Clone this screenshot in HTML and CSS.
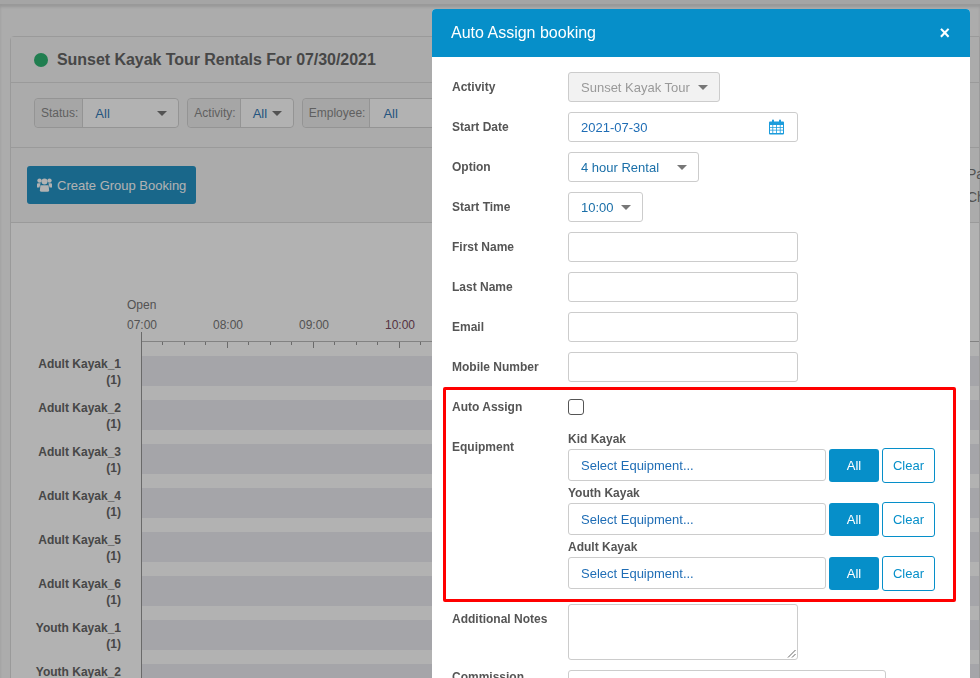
FILE: index.html
```html
<!DOCTYPE html>
<html lang="en">
<head>
    <meta charset="UTF-8">
    <meta name="viewport" content="width=device-width, initial-scale=1.0">
    <title>Auto Assign booking</title>
    <link rel="stylesheet" href="styles.css">
</head>
<body>
    <div class="page">
        <div class="panel">
            <div class="panel-title">
                <span class="dot"></span>
                <h2>Sunset Kayak Tour Rentals For 07/30/2021</h2>
            </div>
            <div class="filters">
                <div class="filter"><span class="filter-label">Status:</span><span class="filter-value status-value">All <i class="caret"></i></span></div>
                <div class="filter"><span class="filter-label">Activity:</span><span class="filter-value activity-value">All <i class="caret"></i></span></div>
                <div class="filter"><span class="filter-label">Employee:</span><span class="filter-value employee-value">All</span></div>
            </div>
            <div class="actions">
                <button class="group-btn">
                    <svg class="group-icon" viewBox="0 0 15 14" width="15" height="14">
                        <circle cx="7.5" cy="3.4" r="3"/>
                        <circle cx="2.5" cy="2.6" r="2.2"/>
                        <circle cx="12.5" cy="2.6" r="2.2"/>
                        <path d="M3.4 7.2h8.2l.5 5q0 1.6-1.6 1.6H4.5q-1.6 0-1.6-1.6z"/>
                        <path d="M0 9.4V6.2q0-1 1-1h2.6L2.4 9.4zM15 9.4V6.2q0-1-1-1h-2.6l1.2 4.2z"/>
                    </svg>
                    <span>Create Group Booking</span>
                </button>
                <div class="cut-text"><span>Pa</span><span>Ch</span></div>
            </div>
            <div class="schedule">
                <div class="open-label">Open</div>
                <div class="hours">
                    <span>07:00</span><span>08:00</span><span>09:00</span><span class="red-hour">10:00</span>
                </div>
                <div class="ruler"></div>
                <div class="row"><div class="row-name">Adult Kayak_1<br>(1)</div><div class="track"><div class="band"></div></div></div>
                <div class="row"><div class="row-name">Adult Kayak_2<br>(1)</div><div class="track"><div class="band"></div></div></div>
                <div class="row"><div class="row-name">Adult Kayak_3<br>(1)</div><div class="track"><div class="band"></div></div></div>
                <div class="row"><div class="row-name">Adult Kayak_4<br>(1)</div><div class="track"><div class="band"></div></div></div>
                <div class="row"><div class="row-name">Adult Kayak_5<br>(1)</div><div class="track"><div class="band"></div></div></div>
                <div class="row"><div class="row-name">Adult Kayak_6<br>(1)</div><div class="track"><div class="band"></div></div></div>
                <div class="row"><div class="row-name">Youth Kayak_1<br>(1)</div><div class="track"><div class="band"></div></div></div>
                <div class="row"><div class="row-name">Youth Kayak_2</div><div class="track"><div class="band"></div></div></div>
            </div>
        </div>
    </div>

    <div class="overlay"></div>

    <div class="modal">
        <div class="modal-head">
            <h3>Auto Assign booking</h3>
            <span class="modal-close">×</span>
        </div>
        <div class="modal-body">
            <div class="form-row">
                <label>Activity</label>
                <div class="field select-field disabled activity-select">Sunset Kayak Tour <i class="caret"></i></div>
            </div>
            <div class="form-row">
                <label>Start Date</label>
                <div class="field date-field">2021-07-30
                    <svg class="cal-icon" viewBox="0 0 15 16" width="15" height="16">
                        <path fill-rule="evenodd" d="M1 2.5h2V1.5a1 1 0 0 1 2 0v1h5v-1a1 1 0 0 1 2 0v1h2a1 1 0 0 1 1 1v11a1 1 0 0 1-1 1H1a1 1 0 0 1-1-1v-11a1 1 0 0 1 1-1zM1 6v2h2.4V6zM4.2 6v2h2.9V6zM7.9 6v2h2.9V6zM11.6 6v2H14V6zM1 8.8v2h2.4v-2zM4.2 8.8v2h2.9v-2zM7.9 8.8v2h2.9v-2zM11.6 8.8v2H14v-2zM1 11.6v2.4h2.4v-2.4zM4.2 11.6v2.4h2.9v-2.4zM7.9 11.6v2.4h2.9v-2.4zM11.6 11.6v2.4H14v-2.4z"/>
                    </svg>
                </div>
            </div>
            <div class="form-row">
                <label>Option</label>
                <div class="field select-field option-select">4 hour Rental <i class="caret"></i></div>
            </div>
            <div class="form-row">
                <label>Start Time</label>
                <div class="field select-field time-select">10:00 <i class="caret"></i></div>
            </div>
            <div class="form-row">
                <label>First Name</label>
                <div class="field text-field"></div>
            </div>
            <div class="form-row">
                <label>Last Name</label>
                <div class="field text-field"></div>
            </div>
            <div class="form-row">
                <label>Email</label>
                <div class="field text-field"></div>
            </div>
            <div class="form-row">
                <label>Mobile Number</label>
                <div class="field text-field"></div>
            </div>

            <div class="assign-box">
                <div class="assign-row">
                    <label>Auto Assign</label>
                    <span class="checkbox"></span>
                </div>
                <div class="equipment-row">
                    <label>Equipment</label>
                    <div class="equipment-list">
                        <div class="equip-name">Kid Kayak</div>
                        <div class="equip-line">
                            <div class="field equip-select">Select Equipment...</div>
                            <button class="btn-all">All</button>
                            <button class="btn-clear">Clear</button>
                        </div>
                        <div class="equip-name">Youth Kayak</div>
                        <div class="equip-line">
                            <div class="field equip-select">Select Equipment...</div>
                            <button class="btn-all">All</button>
                            <button class="btn-clear">Clear</button>
                        </div>
                        <div class="equip-name">Adult Kayak</div>
                        <div class="equip-line">
                            <div class="field equip-select">Select Equipment...</div>
                            <button class="btn-all">All</button>
                            <button class="btn-clear">Clear</button>
                        </div>
                    </div>
                </div>
            </div>

            <div class="notes-row">
                <label>Additional Notes</label>
                <div class="field notes-field">
                    <svg class="grip" viewBox="0 0 9 9" width="9" height="9"><path d="M1 8.5 8.5 1M5 8.5 8.5 5"/></svg>
                </div>
            </div>
            <div class="commission-row">
                <label>Commission</label>
                <div class="field commission-field"></div>
            </div>
        </div>
    </div>
</body>
</html>
```

FILE: styles.css
```css
html, body {
    margin: 0;
    height: 678px;
    overflow: hidden;
}

body {
    font-family: "Liberation Sans", Arial, sans-serif;
    font-size: 13px;
    color: #333;
    background: #fff;
}

.page {
    height: 678px;
    padding: 32px 0 0 10px;
    box-sizing: border-box;
    background: #f7f7f7;
    border-top: 4px solid #ededed;
    box-shadow: inset 0 3px 3px rgba(0,0,0,0.12);
    overflow: hidden;
}

.panel {
    background: #fff;
    border: 1px solid #ddd;
    border-radius: 4px 0 0 0;
    height: 700px;
}

.panel-title {
    display: flex;
    align-items: center;
    height: 45px;
    padding-left: 23px;
    border-bottom: 1px solid #ddd;
    background: #f5f5f5;
}

.dot {
    width: 14px;
    height: 14px;
    border-radius: 50%;
    background: #2fb573;
    margin-right: 9px;
}

h2 {
    margin: 0;
    font-size: 16px;
    font-weight: 700;
    letter-spacing: -0.05px;
    color: #666;
}

.filters {
    display: flex;
    gap: 8px;
    height: 65px;
    padding: 15px 0 0 23px;
    box-sizing: border-box;
    border-bottom: 1px solid #ddd;
    background: #f5f5f5;
}

.filter {
    display: flex;
    height: 30px;
    border: 1px solid #d4d4d4;
    border-radius: 4px;
    font-size: 12px;
    box-sizing: border-box;
}

.filter-label {
    display: flex;
    align-items: center;
    padding: 0 4px 0 6px;
    color: #8a8a8a;
    background: #eee;
    border-right: 1px solid #d4d4d4;
    border-radius: 4px 0 0 4px;
}

.filter-value {
    display: flex;
    align-items: center;
    justify-content: space-between;
    color: #337ab7;
    font-size: 13px;
    background: #fff;
    border-radius: 0 4px 4px 0;
    box-sizing: border-box;
}

.status-value { width: 95px; padding: 0 11px 0 12px; }
.activity-value { width: 52px; padding: 0 11px 0 12px; }
.employee-value { width: 80px; padding: 0 13px; }

.caret {
    display: inline-block;
    width: 0;
    height: 0;
    border-left: 5px solid transparent;
    border-right: 5px solid transparent;
    border-top: 5px solid #777;
}

.actions {
    display: flex;
    height: 75px;
    padding: 18px 0 0 16px;
    box-sizing: border-box;
    border-bottom: 1px solid #ddd;
    background: #f5f5f5;
}

.group-btn {
    display: flex;
    flex: none;
    align-items: center;
    gap: 5px;
    width: 169px;
    height: 38px;
    padding: 0 0 0 10px;
    border: none;
    border-radius: 3px;
    background: #2494c6;
    color: #fff;
    font-family: inherit;
    font-size: 13px;
    white-space: nowrap;
}

.group-icon { fill: #fff; }

.cut-text {
    display: flex;
    flex: none;
    flex-direction: column;
    gap: 7px;
    margin-left: 771px;
    color: #777;
    font-size: 14px;
    line-height: 16px;
}

.schedule {
    padding-top: 75px;
    background: #fff;
}

.open-label,
.hours {
    margin-left: 116px;
    font-size: 12px;
    line-height: 14px;
    color: #777;
}

.hours {
    display: flex;
    margin-top: 6px;
}

.hours span { width: 86px; }
.red-hour { color: #7a4a60; }

.ruler {
    height: 24px;
    margin-left: 130px;
    background:
        linear-gradient(#999, #999) 0 0 / 1px 100% no-repeat,
        linear-gradient(#bbb, #bbb) 0 9px / 100% 1px no-repeat,
        repeating-linear-gradient(90deg, #999 0 1px, transparent 1px 86px) 0 9px / 100% 7px no-repeat,
        repeating-linear-gradient(90deg, #999 0 1px, transparent 1px 21.5px) 0 9px / 100% 4px no-repeat;
}

.row {
    display: flex;
    height: 44px;
}

.row-name {
    width: 110px;
    flex: none;
    font-size: 12px;
    line-height: 16px;
    font-weight: 700;
    text-align: right;
    color: #666;
}

.track {
    flex: 1;
    margin-left: 20px;
    border-left: 1px solid #999;
}

.band {
    height: 30px;
    background: #ecedf2;
}

.overlay {
    position: fixed;
    inset: 0;
    background: rgba(0, 0, 0, 0.3);
}

.modal {
    position: fixed;
    top: 9px;
    left: 432px;
    width: 538px;
    height: 669px;
    overflow: hidden;
    background: #fff;
    border-radius: 4px 4px 0 0;
}

.modal-head {
    display: flex;
    align-items: center;
    justify-content: space-between;
    height: 48px;
    padding: 0 20px 0 19px;
    background: #068fc9;
    color: #fff;
}

h3 {
    margin: 0;
    font-size: 16px;
    font-weight: 400;
}

.modal-close {
    font-size: 18px;
    font-weight: 700;
}

.modal-body {
    padding: 15px 0 0 20px;
}

label {
    display: block;
    width: 116px;
    flex: none;
    font-size: 12px;
    font-weight: 700;
    color: #555;
}

.form-row {
    display: flex;
    align-items: center;
    height: 30px;
    margin-bottom: 10px;
}

.field {
    box-sizing: border-box;
    height: 30px;
    border: 1px solid #ccc;
    border-radius: 3px;
    background: #fff;
    color: #1f6db5;
    font-size: 13px;
    white-space: nowrap;
    display: flex;
    align-items: center;
    padding: 0 12px;
}

.select-field {
    justify-content: space-between;
    padding-right: 11px;
    color: #1a6fa8;
}

.activity-select {
    width: 152px;
    background: #f2f2f2;
    color: #999;
}

.option-select { width: 131px; }
.time-select { width: 75px; }

.date-field {
    width: 230px;
    justify-content: space-between;
    padding-right: 13px;
}

.cal-icon { fill: #1b9cdc; }

.text-field { width: 230px; }

.assign-box {
    box-sizing: border-box;
    width: 513px;
    height: 215px;
    margin: -5px 0 0 -9px;
    padding: 9px 0 0 6px;
    border: 3px solid #f00;
    border-radius: 2px;
}

.assign-row {
    display: flex;
    align-items: center;
    height: 16px;
    margin-bottom: 17px;
}

.checkbox {
    width: 16px;
    height: 16px;
    box-sizing: border-box;
    border: 1px solid #555;
    border-radius: 3px;
}

.equipment-row {
    display: flex;
}

.equipment-row label { padding-top: 8px; }

.equip-name {
    font-size: 12px;
    line-height: 14px;
    font-weight: 700;
    color: #555;
    height: 16px;
}

.equip-line {
    display: flex;
    align-items: flex-start;
    height: 35px;
    margin-bottom: 3px;
}

.equip-select { width: 258px; height: 32px; margin-top: 1px; }

.btn-all,
.btn-clear {
    font-family: inherit;
    font-size: 13px;
    border-radius: 3px;
    padding: 0;
}

.btn-all {
    width: 50px;
    height: 33px;
    margin: 1px 0 0 3px;
    border: none;
    background: #068fc9;
    color: #fff;
}

.btn-clear {
    width: 53px;
    height: 35px;
    margin-left: 3px;
    border: 1px solid #068fc9;
    background: #fff;
    color: #068fc9;
}

.notes-row {
    display: flex;
    margin-top: 2px;
    height: 66px;
}

.notes-row label { padding-top: 8px; }

.notes-field {
    position: relative;
    width: 230px;
    height: 56px;
}

.grip {
    position: absolute;
    right: 1px;
    bottom: 1px;
    fill: none;
    stroke: #666;
    stroke-width: 1;
}

.commission-row { display: flex; height: 30px; }

.commission-field { width: 318px; }
```
